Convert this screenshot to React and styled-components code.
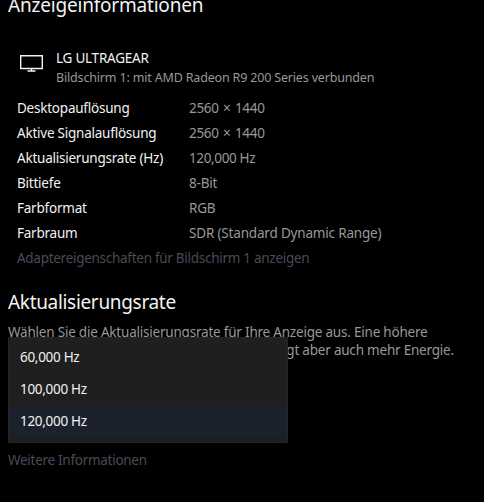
import styled, { createGlobalStyle } from 'styled-components';

const GlobalStyle = createGlobalStyle`
  body {
    margin: 0;
    background: #000;
    overflow: hidden;
    font-family: "Noto Sans", "Open Sans", sans-serif;
    font-size: 13.5px;
    line-height: 19px;
    color: #f2f2f2;
  }
`;

const Page = styled.main`
  box-sizing: border-box;
  width: 484px;
  height: 502px;
  padding-left: 8px;
  overflow: hidden;
  white-space: nowrap;
`;

const Heading = styled.h2`
  margin: 0;
  font-size: 19px;
  font-weight: 400;
  line-height: 28px;
  letter-spacing: ${({ $spacing }) => $spacing}px;
  margin-top: ${({ $top }) => $top}px;
`;

const Display = styled.div`
  display: flex;
  margin-top: 30px;
  padding-left: 12px;
  height: 38px;
`;

const DisplayIcon = styled.svg`
  width: 23px;
  height: 17px;
  margin: 6px 13px 0 0;
`;

const DisplayName = styled.div`
  letter-spacing: -0.24px;
`;

const DisplayDetail = styled.div`
  color: #989898;
  font-size: 12.5px;
  letter-spacing: -0.17px;
`;

const Specs = styled.dl`
  display: grid;
  grid-template-columns: 172px auto;
  grid-auto-rows: 25px;
  margin: 9px 0 0 9px;
  line-height: 25px;
`;

const Label = styled.dt`
  letter-spacing: -0.23px;
`;

const Value = styled.dd`
  margin: 0;
  color: #989898;
  letter-spacing: ${({ $spacing }) => $spacing || -0.18}px;
  word-spacing: ${({ $wordSpacing }) => $wordSpacing || 0}px;
`;

const Link = styled.a`
  display: block;
  width: max-content;
  color: #474c57;
  line-height: 25px;
  margin-left: ${({ $indent }) => $indent || 0}px;
  letter-spacing: -0.28px;
`;

const RateField = styled.div`
  position: relative;
  height: 125px;
  margin-top: 7px;
`;

const Description = styled.div`
  color: #989898;
  line-height: 18px;
  letter-spacing: -0.21px;
`;

const Menu = styled.div`
  position: absolute;
  top: 14px;
  left: 0;
  box-sizing: border-box;
  width: 280px;
  height: 106px;
  padding: 5px 0;
  background: #1f1f1f;
  border: 1px solid #252525;
`;

const Option = styled.div`
  height: 30px;
  margin-bottom: 2px;
  padding-left: 11px;
  line-height: 28px;
  letter-spacing: -0.3px;
  background: ${({ $selected }) => ($selected ? '#1c222d' : 'transparent')};
`;

const specs = [
  { label: 'Desktopauflösung', value: '2560 × 1440', spacing: -0.3, wordSpacing: 1.2 },
  { label: 'Aktive Signalauflösung', value: '2560 × 1440', spacing: -0.3, wordSpacing: 1.2 },
  { label: 'Aktualisierungsrate (Hz)', value: '120,000 Hz', spacing: -0.36 },
  { label: 'Bittiefe', value: '8-Bit' },
  { label: 'Farbformat', value: 'RGB' },
  { label: 'Farbraum', value: 'SDR (Standard Dynamic Range)' },
];

const rates = ['60,000 Hz', '100,000 Hz', '120,000 Hz'];

export default function App() {
  return (
    <>
      <GlobalStyle />
      <Page>
        <Heading $top={-9} $spacing={-0.2}>Anzeigeinformationen</Heading>
        <Display>
          <DisplayIcon viewBox="0 0 23 17" fill="none" stroke="#f2f2f2" strokeWidth="1.4">
            <path d="M0.7 0.7h21.6v12.8h-21.6zM11.5 13.5v2.5M7.5 16h8" />
          </DisplayIcon>
          <div>
            <DisplayName>LG ULTRAGEAR</DisplayName>
            <DisplayDetail>Bildschirm 1: mit AMD Radeon R9 200 Series verbunden</DisplayDetail>
          </div>
        </Display>
        <Specs>
          {specs.map(({ label, value, spacing, wordSpacing }) => [
            <Label key={label}>{label}</Label>,
            <Value key={`${label}-value`} $spacing={spacing} $wordSpacing={wordSpacing}>{value}</Value>,
          ])}
        </Specs>
        <Link $indent={9}>Adaptereigenschaften für Bildschirm 1 anzeigen</Link>
        <Heading $top={17} $spacing={-0.32}>Aktualisierungsrate</Heading>
        <RateField>
          <Description>Wählen Sie die Aktualisierungsrate für Ihre Anzeige aus. Eine höhere</Description>
          <Description>Rate sorgt für flüssigere Bewegungen, benötigt aber auch mehr Energie.</Description>
          <Menu>
            {rates.map((rate) => (
              <Option key={rate} $selected={rate === '120,000 Hz'}>{rate}</Option>
            ))}
          </Menu>
        </RateField>
        <Link>Weitere Informationen</Link>
      </Page>
    </>
  );
}
